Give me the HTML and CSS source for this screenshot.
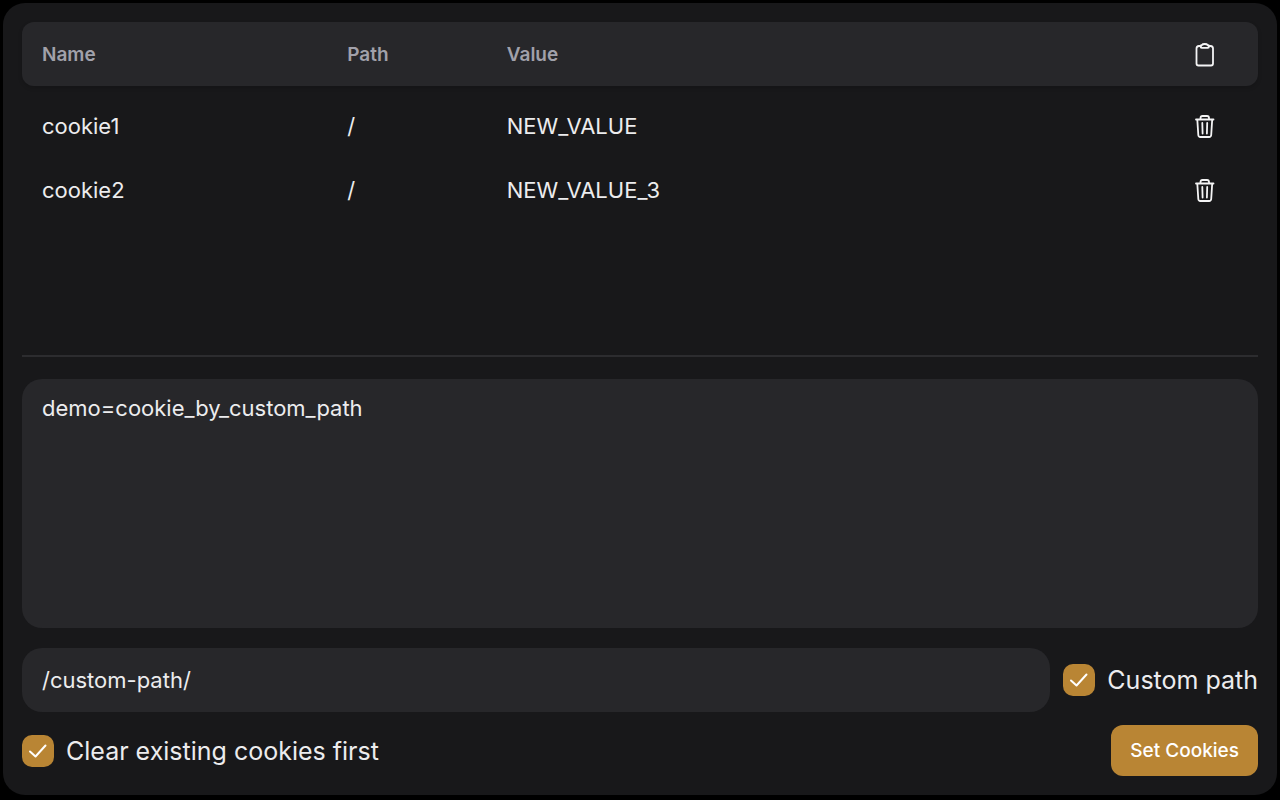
FILE: index.html
```html
<!DOCTYPE html>
<html lang="en">
	<head>
		<meta charset="UTF-8">
		<meta name="viewport" content="width=device-width, initial-scale=1">
		<title>Cookies</title>
		<link rel="stylesheet" href="styles.css">
	</head>
	<body>
		<main class="panel">
			<div class="cookies">
				<table>
					<thead>
						<tr>
							<th class="col-name">Name</th>
							<th class="col-path">Path</th>
							<th>Value</th>
							<th class="col-action">
								<button type="button" class="icon-btn" aria-label="Copy all">
									<svg viewBox="0 0 24 24">
										<path d="M8 3H6Q3.500 3.200 3.500 5.500V20.500Q3.500 22.500 5.500 22.500H18Q20 22.500 20 20.500V5.500Q20 3.200 17.500 3H15.500"/>
										<path d="M9 2Q9.500 1 11.800 1Q14 1 14.500 2Q16 2 16 3.500Q16 4.800 14.800 4.800H8.800Q7.500 4.800 7.500 3.500Q7.500 2 9 2Z"/>
									</svg>
								</button>
							</th>
						</tr>
					</thead>
					<tbody>
						<tr>
							<td>cookie1</td>
							<td>/</td>
							<td>NEW_VALUE</td>
							<td>
								<button type="button" class="icon-btn" aria-label="Delete cookie1">
									<svg viewBox="0 0 24 24">
										<path d="M3 5.500H20.500M7.500 5.500V4Q7.500 2 9.500 2H14Q16 2 16 4V5.500M4.300 5.500L5.300 21Q5.500 23 7.300 23H16.200Q18 23 18.200 21L19.200 5.500M9.300 9L9.600 19.500M14.200 9L13.900 19.500"/>
									</svg>
								</button>
							</td>
						</tr>
						<tr>
							<td>cookie2</td>
							<td>/</td>
							<td>NEW_VALUE_3</td>
							<td>
								<button type="button" class="icon-btn" aria-label="Delete cookie2">
									<svg viewBox="0 0 24 24">
										<path d="M3 5.500H20.500M7.500 5.500V4Q7.500 2 9.500 2H14Q16 2 16 4V5.500M4.300 5.500L5.300 21Q5.500 23 7.300 23H16.200Q18 23 18.200 21L19.200 5.500M9.300 9L9.600 19.500M14.200 9L13.900 19.500"/>
									</svg>
								</button>
							</td>
						</tr>
					</tbody>
				</table>
			</div>
			<hr>
			<form>
				<textarea class="field" aria-label="Cookies to set" spellcheck="false">demo=cookie_by_custom_path</textarea>
				<div class="path-row">
					<input type="text" class="field" aria-label="Path" value="/custom-path/">
					<label class="check" for="customPath">
						<span class="box">
							<input type="checkbox" id="customPath" checked>
							<svg viewBox="0 0 32 32"><path d="M8 16.500L13.500 21.500L23.500 10.500"/></svg>
						</span>
						Custom path
					</label>
				</div>
				<div class="bottom-row">
					<label class="check" for="clearFirst">
						<span class="box">
							<input type="checkbox" id="clearFirst" checked>
							<svg viewBox="0 0 32 32"><path d="M8 16.500L13.500 21.500L23.500 10.500"/></svg>
						</span>
						Clear existing cookies first
					</label>
					<button type="button" class="submit">Set Cookies</button>
				</div>
			</form>
		</main>
	</body>
</html>
```
FILE: styles.css
```css
* {
	box-sizing: border-box;
}
body {
	margin: 0;
	padding: 3px 3px 5px;
	min-height: 100vh;
	display: flex;
	background-color: #000;
	color: #ececee;
	font: 22px/32px Inter, "Liberation Sans", sans-serif;
}
button, input, textarea {
	font: inherit;
	color: inherit;
}
.panel {
	flex: 1;
	min-width: 0;
	display: flex;
	flex-direction: column;
	padding: 19px;
	border-radius: 22px;
	background-color: #18181a;
}
.cookies {
	flex: 1;
}
table {
	width: 100%;
	table-layout: fixed;
	border-spacing: 0;
}
/* space between the header and the first row */
tbody::before {
	content: "";
	display: block;
	height: 8px;
}
thead tr {
	border-radius: 12px;
	box-shadow: 0 2px 4px rgba(0, 0, 0, 0.15);
}
th, td {
	height: 64px;
	padding: 0 20px;
	text-align: left;
}
th {
	padding-top: 2px;
	background-color: #27272a;
	color: #a1a1aa;
	font-size: 19px;
	font-weight: 600;
}
th:first-child {
	border-radius: 12px 0 0 12px;
}
th:last-child {
	border-radius: 0 12px 12px 0;
}
.col-name {
	width: 24.7%;
}
.col-path {
	width: 12.9%;
}
.col-action {
	width: 85px;
}
.icon-btn {
	display: block;
	padding: 0;
	border: none;
	background: none;
	color: #f4f4f5;
	cursor: pointer;
}
svg {
	display: block;
	fill: none;
	stroke: currentColor;
	stroke-linecap: round;
	stroke-linejoin: round;
}
.icon-btn svg {
	width: 24px;
	height: 24px;
	stroke-width: 1.8;
}
hr {
	width: 100%;
	height: 2px;
	margin: 0 0 22px;
	border: none;
	background-color: #2c2c2f;
}
form {
	display: flex;
	flex-direction: column;
}
.field {
	border: none;
	border-radius: 20px;
	outline: none;
	background-color: #27272a;
}
textarea {
	display: block;
	height: 249px;
	padding: 13px 20px;
	resize: none;
}
.path-row {
	display: flex;
	align-items: center;
	gap: 13px;
	margin-top: 20px;
}
.path-row .field {
	flex: 1;
	min-width: 0;
	height: 64px;
	padding: 0 20px;
}
.check {
	display: flex;
	align-items: center;
	gap: 12px;
	font-size: 25px;
	white-space: nowrap;
}
.box {
	display: grid;
	width: 32px;
	height: 32px;
}
.box input, .box svg {
	grid-area: 1 / 1;
	width: 32px;
	height: 32px;
}
.box input {
	appearance: none;
	margin: 0;
	border-radius: 10px;
	background-color: #3f3f46;
}
.box input:checked {
	background-color: #b98534;
}
.box svg {
	color: #fff;
	stroke-width: 2;
	pointer-events: none;
	visibility: hidden;
}
.box input:checked + svg {
	visibility: visible;
}
.bottom-row {
	display: flex;
	align-items: center;
	justify-content: space-between;
	margin-top: 13px;
}
.submit {
	height: 51px;
	padding: 0 19px;
	border: none;
	border-radius: 12px;
	background-color: #b98534;
	color: #fff;
	font-size: 19px;
	font-weight: 500;
	cursor: pointer;
}
```
